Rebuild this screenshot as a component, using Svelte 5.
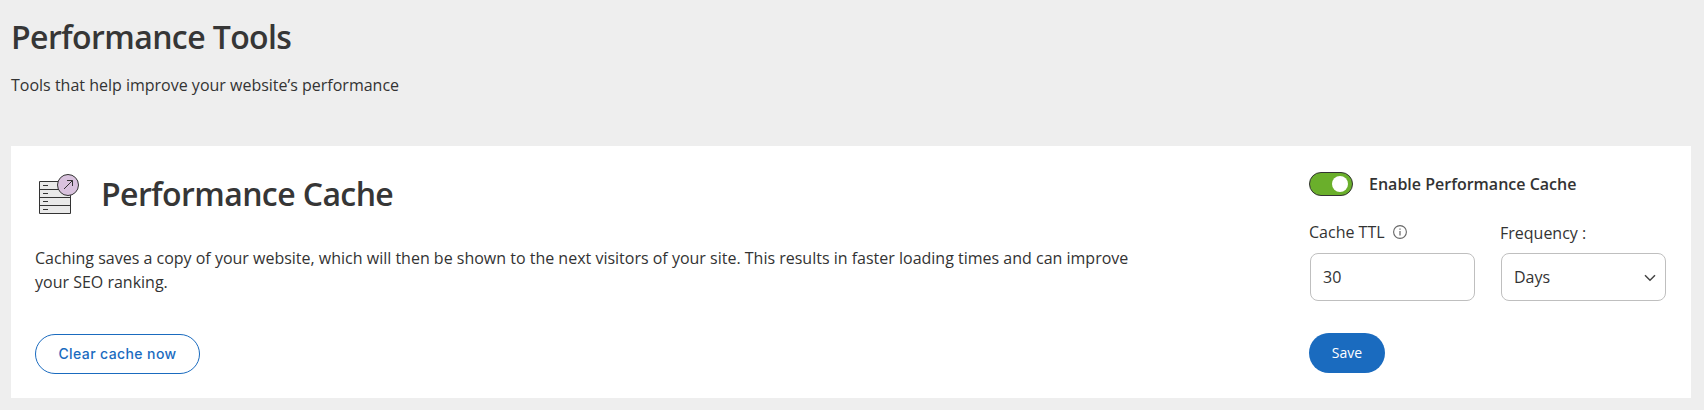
<script>
  let enabled = $state(true);
  let ttl = $state('30');
  let unit = $state('Days');
</script>

<main>
  <header>
    <h1>Performance Tools</h1>
    <p>Tools that help improve your website’s performance</p>
  </header>

  <section class="card">
    <div class="info">
      <div class="heading">
        <svg width="42" height="42" viewBox="0 0 42 42" fill="none" stroke="#333" stroke-width="1">
          <path d="M1.5 8.5h31v32h-31z" fill="#e9e9e9" />
          <path d="M1.5 16.5h31M1.5 24.5h31M1.5 32.5h31M5 12.5h5M5 20.5h5M5 28.5h5M5 36.5h5" />
          <circle cx="30" cy="12" r="10.5" fill="#d9c2de" />
          <path d="M26 16L34.5 7.5M29 7.5h5.5V13" />
        </svg>
        <h2>Performance Cache</h2>
      </div>
      <p>Caching saves a copy of your website, which will then be shown to the next visitors of your site. This results in faster loading times and can improve your SEO ranking.</p>
      <button class="outline">Clear cache now</button>
    </div>

    <div class="settings">
      <div class="toggle">
        <button class="switch" class:on={enabled} role="switch" aria-checked={enabled} aria-labelledby="toggle-label" onclick={() => (enabled = !enabled)}><span></span></button>
        <strong id="toggle-label">Enable Performance Cache</strong>
      </div>
      <div class="fields">
        <div class="field">
          <label for="ttl">Cache TTL
            <svg width="14" height="14" viewBox="0 0 14 14" fill="none" stroke="#666">
              <circle cx="7" cy="7" r="6.4" stroke-width="1.1" />
              <path d="M7 6v4.5M7 3.5v1.3" stroke-width="1.2" />
            </svg>
          </label>
          <input id="ttl" bind:value={ttl} />
        </div>
        <div class="field">
          <label class="frequency" for="unit">Frequency :</label>
          <div class="select">
            <select id="unit" bind:value={unit}><option>Days</option></select>
            <svg width="12" height="8" viewBox="0 0 12 8" fill="none" stroke="#444" stroke-width="1.5"><path d="M1 1.2l5 5 5-5" /></svg>
          </div>
        </div>
      </div>
      <button class="save">Save</button>
    </div>
  </section>
</main>

<style>
  :global(body) { background: #eee; }
  main { box-sizing: border-box; height: 410px; padding: 17px 13px 12px 11px; font: 16px/24px "Open Sans", sans-serif; color: #333; }
  h1, h2, p { margin: 0; }
  h1, h2 { font-size: 32px; line-height: 40px; font-weight: 600; letter-spacing: -0.6px; color: #363636; }
  header { height: 129px; }
  header p { margin-top: 16px; }
  .card { box-sizing: border-box; display: flex; justify-content: space-between; height: 252px; padding: 26px 25px 24px 24px; background: #fff; }
  .info { width: 1130px; }
  .heading { display: flex; height: 74px; gap: 21px; padding-left: 3px; }
  .heading svg { margin-top: 1px; }
  h2 { margin-top: 2px; }
  button { box-sizing: border-box; padding: 0; border: 0; font: inherit; cursor: pointer; }
  .outline { display: block; width: 165px; height: 40px; margin-top: 40px; padding-bottom: 2px; border: 1px solid #1a6bbf; border-radius: 20px; background: #fff; color: #1a6bbf; font: 500 14px "Inter", sans-serif; letter-spacing: 0.4px; }
  .settings { width: 357px; }
  .toggle { display: flex; height: 24px; gap: 16px; }
  .switch { display: flex; align-items: center; width: 44px; height: 24px; padding: 0 4px; border: 1px solid #333; border-radius: 12px; background: #aaa; }
  .switch.on { justify-content: flex-end; background: #6aaf2b; }
  .switch span { width: 16px; height: 16px; border-radius: 50%; background: #fff; }
  strong { font-weight: 600; }
  .fields { display: flex; gap: 26px; margin: 24px 0 32px 1px; }
  .field { width: 165px; }
  label { display: flex; align-items: center; height: 24px; gap: 8px; margin-bottom: 9px; margin-left: -1px; }
  .frequency { padding-top: 1px; height: 24px; margin-bottom: 8px; }
  input, select { box-sizing: border-box; display: block; width: 165px; height: 48px; padding: 0 12px; border: 1px solid #bfbfbf; border-radius: 8px; background: #fff; color: #333; font: inherit; appearance: none; }
  .select { display: grid; align-items: center; }
  .select > * { grid-area: 1 / 1; }
  .select svg { justify-self: end; margin-right: 10px; position: relative; top: 1px; pointer-events: none; }
  .save { display: block; width: 76px; height: 40px; border-radius: 20px; background: #1a6bbf; color: #fff; font-size: 14px; }
</style>
